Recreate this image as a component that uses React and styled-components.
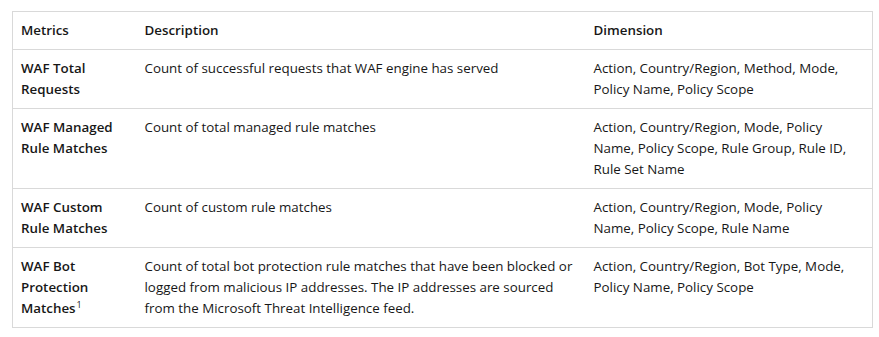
import React from "react";
import styled, { createGlobalStyle } from "styled-components";

const Global = createGlobalStyle`
  body { margin: 0; background: #fff; }
`;

const Page = styled.div`
  padding: 11px 7px 0 12px;
  font-family: "Open Sans", "Noto Sans", sans-serif;
  font-size: 13.35px;
  color: #171717;
`;

const Table = styled.table`
  width: 860px;
  border-collapse: collapse;
  table-layout: fixed;
  border: 1px solid #d9d9d9;
`;

const Col = styled.col`
  width: ${(p) => p.$w}px;
`;

const Th = styled.th`
  text-align: left;
  font-weight: 600;
  padding: 8px;
  line-height: 21px;
  vertical-align: top;
  border-bottom: 1px solid #d9d9d9;
`;

const Td = styled.td`
  padding: 8px;
  line-height: 21px;
  vertical-align: top;
  font-weight: ${(p) => (p.$bold ? 600 : 400)};
  border-top: 1px solid #d9d9d9;
`;

const Sup = styled.sup`
  font-size: 9px;
  line-height: 0;
  vertical-align: 5px;
  margin-left: 1px;
  font-weight: 400;
`;

const rows = [
  {
    metric: "WAF Total Requests",
    desc: "Count of successful requests that WAF engine has served",
    dim: "Action, Country/Region, Method, Mode, Policy Name, Policy Scope",
  },
  {
    metric: "WAF Managed Rule Matches",
    desc: "Count of total managed rule matches",
    dim: "Action, Country/Region, Mode, Policy Name, Policy Scope, Rule Group, Rule ID, Rule Set Name",
  },
  {
    metric: "WAF Custom Rule Matches",
    desc: "Count of custom rule matches",
    dim: "Action, Country/Region, Mode, Policy Name, Policy Scope, Rule Name",
  },
  {
    metric: "WAF Bot Protection Matches",
    sup: "1",
    desc: "Count of total bot protection rule matches that have been blocked or logged from malicious IP addresses. The IP addresses are sourced from the Microsoft Threat Intelligence feed.",
    dim: "Action, Country/Region, Bot Type, Mode, Policy Name, Policy Scope",
  },
];

export default function App() {
  return (
    <>
      <Global />
      <Page>
        <Table>
          <colgroup>
            <Col $w={124} />
            <Col $w={449} />
            <Col $w={287} />
          </colgroup>
          <thead>
            <tr>
              <Th>Metrics</Th>
              <Th>Description</Th>
              <Th>Dimension</Th>
            </tr>
          </thead>
          <tbody>
            {rows.map((r) => (
              <tr key={r.metric}>
                <Td $bold>
                  {r.metric}
                  {r.sup && <Sup>{r.sup}</Sup>}
                </Td>
                <Td>{r.desc}</Td>
                <Td>{r.dim}</Td>
              </tr>
            ))}
          </tbody>
        </Table>
      </Page>
    </>
  );
}
